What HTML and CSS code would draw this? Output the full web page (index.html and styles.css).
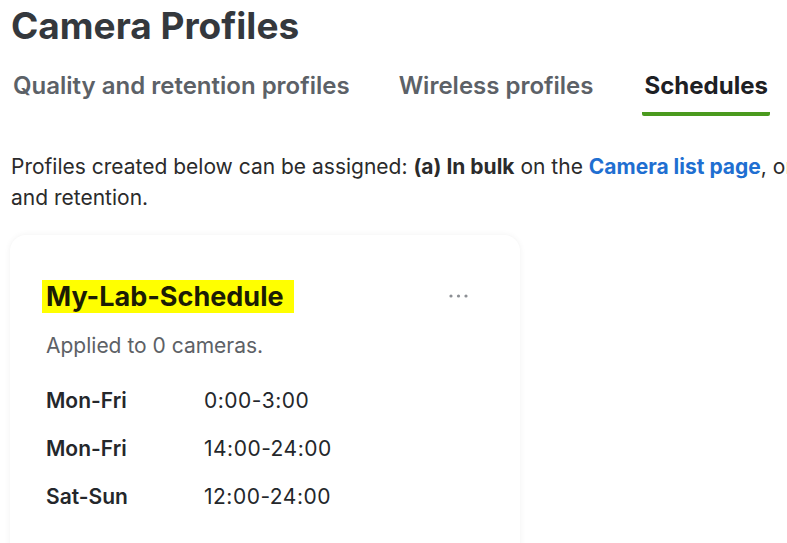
FILE: index.html
```html
<!DOCTYPE html>
<html lang="en">
<head>
    <meta charset="UTF-8">
    <meta name="viewport" content="width=device-width, initial-scale=1.0">
    <title>Camera Profiles</title>
    <link rel="stylesheet" href="styles.css">
</head>
<body>
    <div class="page">
        <h1 class="page-title">Camera Profiles</h1>

        <div class="tabs">
            <div class="tab">Quality and retention profiles</div>
            <div class="tab">Wireless profiles</div>
            <div class="tab active">Schedules</div>
        </div>

        <p class="intro">
            <span class="intro-line">Profiles created below can be assigned: <b>(a) In bulk</b> on the <a href="#" class="link">Camera list page</a>, or <b>(b) Individually</b> under quality</span><br>
            and retention.
        </p>

        <div class="card">
            <div class="card-head">
                <h2 class="card-title"><span class="marker">My-Lab-Schedule</span></h2>
                <button class="more-button" aria-label="More">
                    <svg width="20" height="4" viewBox="0 0 20 4">
                        <circle cx="2" cy="2" r="1.6" fill="#8c8f94"/>
                        <circle cx="9.5" cy="2" r="1.6" fill="#8c8f94"/>
                        <circle cx="17" cy="2" r="1.6" fill="#8c8f94"/>
                    </svg>
                </button>
            </div>
            <p class="card-sub">Applied to 0 cameras.</p>
            <div class="schedule">
                <div class="days">Mon-Fri</div>
                <div class="hours">0:00-3:00</div>
                <div class="days">Mon-Fri</div>
                <div class="hours">14:00-24:00</div>
                <div class="days">Sat-Sun</div>
                <div class="hours">12:00-24:00</div>
            </div>
        </div>
    </div>
</body>
</html>
```

FILE: styles.css
```css
body {
    margin: 0;
    padding: 0;
    background: #ffffff;
    font-family: 'Inter', sans-serif;
    color: #24272b;
    overflow: hidden;
}

.page {
    padding: 0 0 0 11px;
}

.page-title {
    margin: 0;
    padding-top: 4px;
    font-size: 37px;
    line-height: 44px;
    font-weight: 700;
    color: #34383d;
}

.tabs {
    display: flex;
    gap: 45px;
    margin-top: 23px;
}

.tab {
    padding: 0 2px 11px;
    font-size: 24px;
    line-height: 30px;
    font-weight: 600;
    color: #5c6167;
    border-bottom: 4px solid transparent;
}

.tab.active {
    margin-left: 2px;
    font-weight: 700;
    color: #1d2024;
    border-bottom-color: #4a9a1e;
    border-radius: 0 0 2px 2px;
}

.intro {
    margin: 35px 0 0;
    font-size: 21px;
    line-height: 31px;
    color: #2b2b2b;
}

.intro-line {
    white-space: nowrap;
}

.intro b {
    font-weight: 700;
}

.link {
    color: #1f6fd1;
    font-weight: 700;
    text-decoration: none;
}

.card {
    margin-top: 22px;
    margin-left: -1px;
    width: 510px;
    height: 340px;
    box-sizing: border-box;
    padding: 46px 36px 0;
    background: #ffffff;
    border-radius: 16px;
    box-shadow: 0 0 6px rgba(0, 0, 0, 0.06);
}

.card-head {
    display: flex;
    align-items: center;
    justify-content: space-between;
}

.card-title {
    margin: 0;
    font-size: 27px;
    line-height: 32px;
    font-weight: 700;
    color: #1b1c05;
}

.marker {
    background: #ffff00;
    margin-left: -4px;
    padding: 0 10px 0 4px;
}

.more-button {
    background: transparent;
    border: none;
    padding: 0;
    margin: 0 15px 3px 0;
    display: flex;
    cursor: pointer;
}

.card-sub {
    margin: 19px 0 0;
    font-size: 21px;
    line-height: 28px;
    color: #5d6166;
}

.schedule {
    display: grid;
    grid-template-columns: 158px auto;
    row-gap: 20px;
    margin-top: 27px;
    font-size: 21px;
    line-height: 28px;
    color: #24272b;
}

.days {
    font-weight: 600;
}

.hours {
    letter-spacing: 0.5px;
}
```
